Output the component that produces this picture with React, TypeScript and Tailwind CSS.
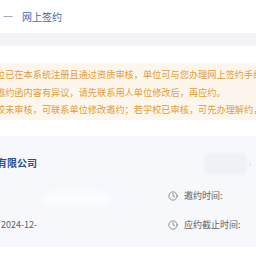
import { Clock } from "lucide-react";

export default function App() {
  return (
    <div className="w-[256px] h-[256px] overflow-hidden bg-white font-['Noto_Sans_CJK_SC','Noto_Sans',sans-serif]">
      {/* 面包屑 */}
      <div className="h-[33px] flex items-center pl-[3px] text-[10px] leading-none">
        <span className="text-[#8e95a3] w-[19px]">一</span>
        <span className="text-[#4767a6]">网上签约</span>
      </div>
      <div className="h-[13px] bg-[#f4f4f7]" />

      {/* 提示 */}
      <div className="pt-[17px] pb-[16px]">
        <div className="bg-[#fdf6ec] pt-[3px] pb-[1px] overflow-hidden">
          <div className="-ml-[4px] whitespace-nowrap text-[9.2px] leading-[17.5px] text-[#e39d3a]">
            <p>位已在本系统注册且通过资质审核，单位可与您办理网上签约手续</p>
            <p>邀约函内容有异议，请先联系用人单位修改后，再应约。</p>
            <p>校未审核，可联系单位修改邀约；若学校已审核，可先办理解约，</p>
          </div>
        </div>
      </div>

      {/* 邀约卡片 */}
      <div className="relative h-[111px] bg-[#f6f8fc] flex">
        <div className="flex-1">
          <div className="pt-[20px] -ml-[3px] text-[10px] leading-[14px] font-bold text-[#2f4d8c] whitespace-nowrap">
            有限公司
          </div>
          <div className="mt-[48px] pl-[1px] text-[9px] leading-[14px] text-[#606266]">2024-12-</div>
        </div>
        <div className="w-[88px] pt-[53px] text-[9px] leading-[14px] text-[#606266]">
          <div className="flex items-center gap-[6px]">
            <Clock size={10} strokeWidth={1.6} className="text-[#606266]" />
            <span>邀约时间:</span>
          </div>
          <div className="mt-[15px] flex items-center gap-[6px]">
            <Clock size={10} strokeWidth={1.6} className="text-[#606266]" />
            <span>应约截止时间:</span>
          </div>
        </div>
        <div className="absolute left-[204px] top-[17px] w-[43px] h-[21px] rounded-[6px] bg-[#eff1f5] blur-[1px]" />
        <span className="absolute left-[249px] top-[24px] text-[7px] leading-none text-[#c8ccd4]">‹</span>
        <div className="absolute left-[43px] top-[56px] w-[67px] h-[14px] rounded-full bg-[#fbfcfe] blur-[3px]" />
      </div>
    </div>
  );
}
